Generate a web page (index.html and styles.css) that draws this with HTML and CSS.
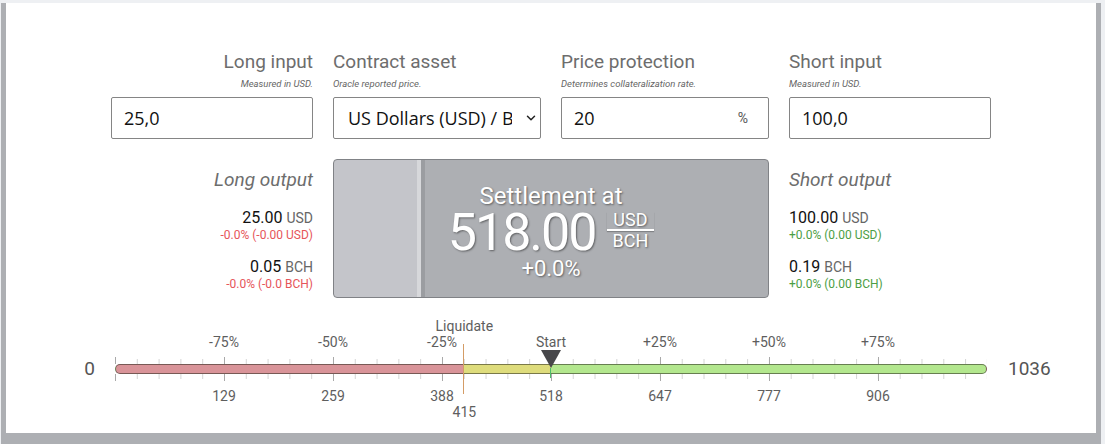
FILE: index.html
```html
<!DOCTYPE html>
<html lang="en">
<head>
<meta charset="utf-8">
<title>Contract calculator</title>
<link rel="stylesheet" href="styles.css">
</head>
<body>
<div class="frame">
  <main class="card">
    <section class="inputs">
      <div class="field-col right">
        <div class="heading">Long input</div>
        <div class="sub">Measured in USD.</div>
        <div class="box"><input class="inp" type="text" value="25,0"></div>
      </div>
      <div class="field-col">
        <div class="heading">Contract asset</div>
        <div class="sub">Oracle reported price.</div>
        <div class="box select-box">
          <select class="sel">
            <option>US Dollars (USD) / Bitcoin Cash (BCH)</option>
          </select>
          <svg class="chev" width="10" height="6" viewBox="0 0 10 6"><path d="M1.5 1.2l3.5 3.5 3.5-3.5" fill="none" stroke="#222" stroke-width="1.5" stroke-linecap="round" stroke-linejoin="round"/></svg>
        </div>
      </div>
      <div class="field-col">
        <div class="heading">Price protection</div>
        <div class="sub">Determines collateralization rate.</div>
        <div class="box"><input class="inp" type="text" value="20"><span class="unit">%</span></div>
      </div>
      <div class="field-col">
        <div class="heading">Short input</div>
        <div class="sub">Measured in USD.</div>
        <div class="box"><input class="inp" type="text" value="100,0"></div>
      </div>
    </section>

    <section class="outputs">
      <div class="out-col right">
        <div class="out-title">Long output</div>
        <div class="out-group">
          <div class="val">25.00 <span class="cur">USD</span></div>
          <div class="delta neg">-0.0% (-0.00 USD)</div>
        </div>
        <div class="out-group">
          <div class="val">0.05 <span class="cur">BCH</span></div>
          <div class="delta neg">-0.0% (-0.0 BCH)</div>
        </div>
      </div>
      <div class="settle">
        <div class="settle-title">Settlement at</div>
        <div class="settle-row">
          <span class="settle-num">518.00</span>
          <span class="frac"><span class="frac-top">USD</span><span class="frac-bot">BCH</span></span>
        </div>
        <div class="settle-pct">+0.0%</div>
      </div>
      <div class="out-col">
        <div class="out-title">Short output</div>
        <div class="out-group">
          <div class="val">100.00 <span class="cur">USD</span></div>
          <div class="delta pos">+0.0% (0.00 USD)</div>
        </div>
        <div class="out-group">
          <div class="val">0.19 <span class="cur">BCH</span></div>
          <div class="delta pos">+0.0% (0.00 BCH)</div>
        </div>
      </div>
    </section>

    <section class="scale-row">
      <div class="end end-left">0</div>
      <div class="scale">
        <div class="lbl" style="left:40.06%;top:2px">Liquidate</div>
        <div class="lbl pct" style="left:12.5%">-75%</div>
        <div class="lbl pct" style="left:25%">-50%</div>
        <div class="lbl pct" style="left:37.5%">-25%</div>
        <div class="lbl pct" style="left:50%">Start</div>
        <div class="lbl pct" style="left:62.5%">+25%</div>
        <div class="lbl pct" style="left:75%">+50%</div>
        <div class="lbl pct" style="left:87.5%">+75%</div>

        <div class="ticks ticks-top"></div>
        <div class="ticks ticks-bottom"></div>
        <div class="majors majors-top"></div>
        <div class="majors majors-bottom"></div>

        <div class="track"></div>
        <div class="liq-line" style="left:348px"></div>
        <div class="start-line" style="left:435px"></div>
        <svg class="marker" style="left:426px" width="20" height="18" viewBox="0 0 20 18"><path d="M0 0H20L10 18Z" fill="#47474a"/></svg>

        <div class="lbl num" style="left:12.5%">129</div>
        <div class="lbl num" style="left:25%">259</div>
        <div class="lbl num" style="left:37.5%">388</div>
        <div class="lbl num" style="left:50%">518</div>
        <div class="lbl num" style="left:62.5%">647</div>
        <div class="lbl num" style="left:75%">777</div>
        <div class="lbl num" style="left:87.5%">906</div>
        <div class="lbl num liq-num" style="left:40.06%">415</div>
      </div>
      <div class="end end-right">1036</div>
    </section>
  </main>
</div>
</body>
</html>
```

FILE: styles.css
```css
* { box-sizing: border-box; }

html, body {
  margin: 0;
  padding: 0;
}

body {
  background: #eef0f3;
  font-family: Roboto, "Noto Sans", sans-serif;
  color: #222;
  overflow: hidden;
}

.frame {
  margin: 13px 4px 0 1px;
  background: #adafb3;
  padding: 0 5px 11px 5px;
}

.card {
  background: #ffffff;
  margin-top: -10px;
  height: 430px;
  padding-top: 47px;
}

/* ---------- inputs ---------- */
.inputs {
  display: grid;
  grid-template-columns: 202px 208px 208px 202px;
  column-gap: 20px;
  justify-content: center;
}

.field-col.right { text-align: right; }

.heading {
  font-size: 19px;
  line-height: 24px;
  color: #6d6d6d;
}

.sub {
  margin-top: 3px;
  font-size: 9.5px;
  line-height: 13px;
  font-style: italic;
  color: #666;
}

.box {
  position: relative;
  margin-top: 7px;
  height: 42px;
  display: flex;
  align-items: center;
  border: 1px solid #858585;
  border-radius: 2px;
  background: #fff;
}

.inp {
  flex: 1;
  min-width: 0;
  height: 100%;
  border: 0;
  outline: 0;
  background: transparent;
  padding: 0 0 0 12px;
  font-family: "Open Sans", "Noto Sans", sans-serif;
  font-size: 18px;
  color: #111;
}

.unit {
  padding-right: 20px;
  font-size: 14px;
  color: #555;
}

.sel {
  appearance: none;
  -webkit-appearance: none;
  width: 100%;
  height: 100%;
  border: 0;
  outline: 0;
  background: transparent;
  padding: 0 28px 0 14px;
  font-family: "Open Sans", "Noto Sans", sans-serif;
  font-size: 18px;
  color: #111;
}

.chev {
  position: absolute;
  right: 4px;
  top: 17px;
  pointer-events: none;
}

/* ---------- outputs ---------- */
.outputs {
  display: grid;
  grid-template-columns: 202px 436px 202px;
  column-gap: 20px;
  justify-content: center;
  margin-top: 20px;
}

.out-col { padding-top: 9px; }
.out-col.right { text-align: right; }

.out-title {
  font-size: 19px;
  line-height: 24px;
  font-style: italic;
  color: #6d6d6d;
  margin-bottom: 17px;
}

.out-group + .out-group { margin-top: 15px; }

.val {
  font-size: 16px;
  line-height: 18px;
  color: #111;
}

.cur {
  font-size: 14px;
  color: #666;
}

.delta {
  font-size: 12px;
  line-height: 16px;
}

.neg { color: #e6555a; }
.pos { color: #4c9e45; }

.settle {
  height: 139px;
  border: 1px solid #808286;
  border-radius: 4px;
  background: linear-gradient(to right,
    #c4c5ca 0 83px,
    #d7d8db 83px 87px,
    #9b9da1 87px 91px,
    #adafb3 91px);
  color: #fff;
  text-shadow: 1px 1px 2px rgba(0, 0, 0, 0.45);
  text-align: center;
  padding-top: 24px;
}

.settle-title {
  font-size: 24px;
  line-height: 24px;
}

.settle-row {
  display: flex;
  justify-content: center;
  align-items: center;
  gap: 11px;
  height: 50px;
}

.settle-num {
  font-size: 52px;
  line-height: 50px;
  letter-spacing: -2px;
}

.frac {
  display: inline-flex;
  flex-direction: column;
  align-items: stretch;
  font-size: 18px;
  line-height: 16px;
  margin-top: -5px;
}

.frac-top {
  padding: 0 6px 1px;
  border-bottom: 2px solid #fff;
  box-shadow: 0 1px 1px rgba(0, 0, 0, 0.25);
}

.frac-bot { padding: 2px 6px 0; }

.settle-pct {
  font-size: 22px;
  line-height: 22px;
}

/* ---------- scale ---------- */
.scale-row {
  margin-top: 18px;
  display: flex;
  justify-content: center;
  align-items: flex-start;
  gap: 20px;
}

.end {
  width: 60px;
  margin-top: 42px;
  font-size: 19px;
  line-height: 22px;
  color: #555;
}

.end-left { text-align: right; }
.end-right { text-align: left; padding-left: 1px; }

.scale {
  position: relative;
  width: 872px;
  height: 104px;
}

.lbl {
  position: absolute;
  transform: translateX(-50%);
  font-size: 14px;
  line-height: 16px;
  color: #5e5e5e;
  white-space: nowrap;
}

.pct { top: 18px; }
.num { top: 72px; }
.liq-num { top: 88px; }

.ticks, .majors {
  position: absolute;
  left: 0;
  width: 100%;
  background-repeat: repeat-x;
}

.ticks {
  height: 5px;
  background-image: linear-gradient(to right, #d4d4d4 1px, transparent 1px);
  background-size: 2.5% 100%;
}

.ticks-top { top: 43px; }
.ticks-bottom { top: 58px; }

.majors {
  height: 7px;
  background-image: linear-gradient(to right, #a9a9a9 1px, transparent 1px);
  background-size: 12.5% 100%;
}

.majors-top { top: 41px; }
.majors-bottom { top: 58px; }

.track {
  position: absolute;
  left: 0;
  top: 48px;
  width: 100%;
  height: 10px;
  border: 1px solid rgba(40, 40, 30, 0.55);
  border-radius: 6px;
  background: linear-gradient(to right,
    #d99499 0 39.95%,
    #dedc7c 39.95% 50%,
    #b3e78e 50%);
}

.liq-line {
  position: absolute;
  top: 28px;
  width: 1px;
  height: 50px;
  background: #d49c66;
}

.start-line {
  position: absolute;
  top: 52px;
  width: 1px;
  height: 10px;
  background: #4dbb6a;
}

.marker {
  position: absolute;
  top: 34px;
  display: block;
}
```
